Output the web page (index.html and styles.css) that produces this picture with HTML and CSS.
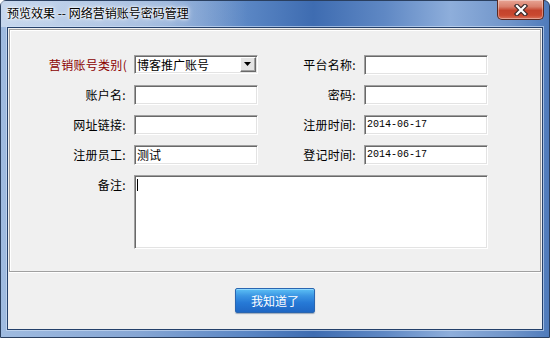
FILE: index.html
```html
<!DOCTYPE html>
<html lang="zh-CN">
<head>
<meta charset="utf-8">
<link rel="stylesheet" href="styles.css">
</head>
<body>
<div class="window">
  <div class="titlebar">
    <span class="title">预览效果 -- 网络营销账号密码管理</span>
    <button class="close" aria-label="关闭">
      <svg width="20" height="12" viewBox="0 0 20 12">
        <path d="M6 2 L14 10 M14 2 L6 10" stroke="#3a2a2a" stroke-width="4.5" stroke-linecap="square"/>
        <path d="M6 2 L14 10 M14 2 L6 10" stroke="#ffffff" stroke-width="2.2" stroke-linecap="square"/>
      </svg>
    </button>
  </div>
  <div class="client">
    <div class="panel">
      <div class="form">
        <label class="lbl req">营销账号类别(</label>
        <div class="field select">
          <span class="val">博客推广账号</span>
          <span class="drop"><svg width="8" height="5" viewBox="0 0 8 5"><path d="M0 0 H7 L3.5 4 Z" fill="#000"/></svg></span>
        </div>
        <label class="lbl">平台名称:</label>
        <div class="field"></div>

        <label class="lbl">账户名:</label>
        <div class="field"></div>
        <label class="lbl">密码:</label>
        <div class="field"></div>

        <label class="lbl">网址链接:</label>
        <div class="field"></div>
        <label class="lbl">注册时间:</label>
        <div class="field mono">2014-06-17</div>

        <label class="lbl">注册员工:</label>
        <div class="field">测试</div>
        <label class="lbl">登记时间:</label>
        <div class="field mono">2014-06-17</div>

        <label class="lbl">备注:</label>
        <div class="field area"><span class="caret"></span></div>
      </div>
    </div>
    <div class="footer">
      <button class="ok">我知道了</button>
    </div>
  </div>
</div>
</body>
</html>
```

FILE: styles.css
```css
html, body {
  margin: 0;
  padding: 0;
}
body {
  width: 550px;
  height: 338px;
  overflow: hidden;
  font-family: "Noto Sans CJK SC", "Noto Sans", sans-serif;
  font-size: 12px;
  color: #000;
}
.window {
  box-sizing: border-box;
  width: 550px;
  height: 338px;
  display: flex;
  flex-direction: column;
  border: 1px solid #2a3f5f;
  border-radius: 6px 6px 0 0;
  background: linear-gradient(90deg, #9fbbe0 0%, #86a6d4 25%, #5a86c4 45%, #3e6cb1 57%, #5f88c4 70%, #8eaedb 82%, #6f94c9 93%, #4f7bbb 100%);
}
.titlebar {
  flex-shrink: 0;
  height: 26px;
  display: flex;
  align-items: flex-start;
  justify-content: space-between;
  padding-left: 6px;
  background: linear-gradient(90deg, rgba(230,238,248,0.55) 0%, rgba(230,238,248,0.35) 30%, rgba(230,238,248,0) 45%);
}
.title {
  margin-top: 4px;
  line-height: 16px;
  text-shadow: 0 0 6px #fff, 0 0 3px #fff, 0 0 2px #fff;
}
.close {
  width: 47px;
  height: 20px;
  margin: -1px 5px 0 0;
  padding: 0;
  border: 1px solid #5a2a22;
  border-top: none;
  border-radius: 0 0 5px 5px;
  background: linear-gradient(180deg, #e8a595 0%, #d9806c 35%, #c4432c 55%, #c9482f 80%, #d9725a 100%);
  display: flex;
  align-items: center;
  justify-content: center;
  box-shadow: inset 0 0 0 1px rgba(255,255,255,0.35);
}
.close svg { display: block; }
.client {
  flex: 1;
  min-height: 0;
  margin: 0 6px 7px 6px;
  border: 1px solid #24406a;
  background: #f0f0f0;
  display: flex;
  flex-direction: column;
  box-shadow: 0 0 0 1px rgba(210,225,245,0.6);
}
.panel {
  box-sizing: border-box;
  flex-shrink: 0;
  height: 243px;
  margin: 1px 1px 0 1px;
  border: 1px solid #a0a0a0;
  box-shadow: inset 1px 1px 0 #fff, 0 1px 0 #fff;
  padding-top: 25px;
}
.form {
  display: grid;
  grid-template-columns: 124px 124px 106px 124px;
  grid-auto-rows: 20px;
  row-gap: 10px;
  align-items: start;
}
.lbl {
  text-align: right;
  padding-right: 8px;
  line-height: 20px;
  white-space: nowrap;
  overflow: hidden;
  letter-spacing: 0.3px;
}
.lbl.req {
  color: #8b0000;
  padding-right: 7px;
}
.field {
  box-sizing: border-box;
  height: 20px;
  background: #fff;
  border: 1px solid;
  border-color: #a0a0a0 #fff #fff #a0a0a0;
  box-shadow: inset 1px 1px 0 #696969, inset -1px -1px 0 #e3e3e3;
  padding-left: 2px;
  line-height: 18px;
  white-space: nowrap;
  overflow: hidden;
}
.mono {
  font-family: "Liberation Mono", "DejaVu Sans Mono", monospace;
  font-size: 10px;
  padding-left: 2px;
}
.select {
  display: flex;
  justify-content: space-between;
  align-items: center;
  height: 19px;
}
.select .val {
  line-height: 17px;
}
.drop {
  box-sizing: border-box;
  width: 16px;
  height: 15px;
  margin-right: 1px;
  background: #e4e4e4;
  border: 1px solid;
  border-color: #fff #696969 #696969 #fff;
  box-shadow: inset -1px -1px 0 #a0a0a0;
  display: flex;
  align-items: center;
  justify-content: center;
}
.drop svg { display: block; }
.area {
  grid-column: 2 / 5;
  grid-row: span 3;
  height: 74px;
  width: 354px;
  position: relative;
}
.caret {
  position: absolute;
  left: 2px;
  top: 3px;
  width: 1px;
  height: 12px;
  background: #000;
}
.footer {
  flex: 1;
  display: flex;
  justify-content: center;
  align-items: flex-start;
  padding-top: 16px;
}
.ok {
  box-sizing: border-box;
  width: 80px;
  height: 25px;
  padding: 0;
  border: 1px solid #2a66b0;
  border-radius: 2px;
  background: linear-gradient(180deg, #5cc0f5 0%, #3b95e3 30%, #2679d6 60%, #1f67c4 100%);
  box-shadow: inset 0 1px 0 #8fd8ff, 0 1px 1px rgba(0,40,90,0.35);
  color: #fff;
  font-family: "Noto Sans CJK SC", sans-serif;
  font-size: 12px;
  line-height: 22px;
}
```
